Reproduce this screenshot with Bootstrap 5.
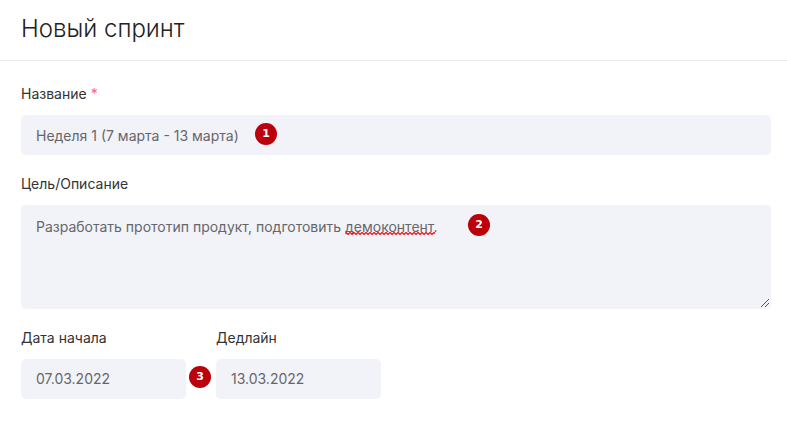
<!DOCTYPE html>
<html lang="ru">
<head>
<meta charset="utf-8">
<meta name="viewport" content="width=device-width, initial-scale=1">
<title>Новый спринт</title>
<link href="https://cdn.jsdelivr.net/npm/bootstrap@5.3.0/dist/css/bootstrap.min.css" rel="stylesheet">
<style>
  body { font-family: Inter, "Noto Sans", sans-serif; font-size: 14px; color: #333; background: #fff; font-optical-sizing: none; }
  .page-head { padding: 13px 21px 15px; border-bottom: 1px solid #e6e8ec; }
  .page-title { font-size: 24px; line-height: 32px; font-weight: 300; color: #222; }
  .sprint-form { padding: 22px 16px 22px 21px; gap: 18px; }
  .form-label { font-size: 14px; line-height: 22px; margin-bottom: 10px; color: #333; }
  .required-star { color: #fd5f7c; }
  .form-control, .form-control:focus {
    font-size: 14px; line-height: 20px; padding: 10px 15px; border: 0; border-radius: 5px;
    background: #f2f3f9; color: #66666a;
  }
  .form-control { height: 40px; }
  textarea.form-control { height: 104px; padding-top: 12px; min-height: 40px; resize: none; }
  .dates { gap: 30px; }
  .date-field { width: 165px; }
  .date-field .form-control { padding-top: 9px; padding-bottom: 11px; }
  .step {
    width: 22px; height: 22px; border-radius: 50%; background: #bb000b; color: #fff;
    font: bold 11px/22px "DejaVu Sans", sans-serif; text-align: center;
  }
  .step-name { left: 234px; top: 8px; }
  .step-goal { left: 447px; top: 9px; }
  .step-dates { left: 168px; bottom: 11px; }
  .spell-wave { left: 325px; top: 27px; }
  .grip { right: 2px; bottom: 2px; pointer-events: none; }
</style>
<script src="https://cdn.jsdelivr.net/npm/bootstrap@5.3.0/dist/js/bootstrap.bundle.min.js"></script>
</head>
<body>
<header class="page-head">
  <h1 class="page-title mb-0">Новый спринт</h1>
</header>
<form class="sprint-form d-flex flex-column">
  <div>
    <label class="form-label d-block" for="name">Название <span class="required-star">*</span></label>
    <div class="position-relative">
      <input class="form-control" id="name" type="text" value="Неделя 1 (7 марта - 13 марта)" required>
      <span class="step step-name position-absolute">1</span>
    </div>
  </div>
  <div>
    <label class="form-label d-block" for="goal">Цель/Описание</label>
    <div class="position-relative">
      <textarea class="form-control d-block" id="goal" spellcheck="false">Разработать прототип продукт, подготовить демоконтент.</textarea>
      <svg class="spell-wave position-absolute" width="89" height="4" aria-hidden="true">
        <defs>
          <pattern id="wave" width="4" height="4" patternUnits="userSpaceOnUse">
            <path d="M-1 1.5 L0 0.5 L2 2.5 L4 0.5 L5 1.5" fill="none" stroke="#f00" stroke-width="1.2"/>
          </pattern>
        </defs>
        <rect width="89" height="4" fill="url(#wave)"/>
      </svg>
      <svg class="grip position-absolute" width="8" height="8" shape-rendering="crispEdges" fill="#555" aria-hidden="true">
        <path d="M7 0h1v1h-1zM6 1h1v1h-1zM5 2h1v1h-1zM4 3h1v1h-1zM3 4h1v1h-1zM2 5h1v1h-1zM1 6h1v1h-1zM0 7h1v1h-1zM7 4h1v1h-1zM6 5h1v1h-1zM5 6h1v1h-1zM4 7h1v1h-1z"/>
      </svg>
      <span class="step step-goal position-absolute">2</span>
    </div>
  </div>
  <div class="dates d-flex position-relative">
    <div class="date-field">
      <label class="form-label d-block" for="start">Дата начала</label>
      <input class="form-control" id="start" type="text" value="07.03.2022">
    </div>
    <div class="date-field">
      <label class="form-label d-block" for="deadline">Дедлайн</label>
      <input class="form-control" id="deadline" type="text" value="13.03.2022">
    </div>
    <span class="step step-dates position-absolute">3</span>
  </div>
</form>
</body>
</html>
